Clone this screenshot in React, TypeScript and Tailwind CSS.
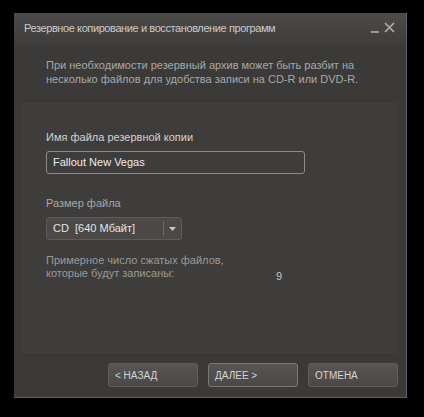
export default function App() {
  return (
    <div
      className="w-[424px] h-[417px] bg-black pt-[13px] pl-[14px]"
      style={{ fontFamily: '"Liberation Sans", Arial, sans-serif' }}
    >
      <div className="w-[393px] h-[385px] flex flex-col bg-[#3b3a38] border-r border-b border-[#56606c]">
        {/* title bar */}
        <div className="h-[32px] flex items-start justify-between pl-[10px] pr-[11px] pt-[8px] bg-gradient-to-b from-[#4d4b49] to-[#3e3d3b]">
          <span className="text-[11px] tracking-[-0.4px] text-[#cacaca] leading-[14px]">
            Резервное копирование и восстановление программ
          </span>
          <div className="flex items-center gap-[5px] mt-[1px]">
            <div className="w-[8px] h-[2px] bg-[#9a9a9a] mt-[9px]" />
            <svg width="11" height="11" viewBox="0 0 11 11">
              <path d="M1 1L10 10M10 1L1 10" stroke="#b0b0b0" strokeWidth="1.6" />
            </svg>
          </div>
        </div>

        <p className="mt-[13px] ml-[32px] text-[11px] leading-[14px] text-[#a8a8a8]">
          При необходимости резервный архив может быть разбит на
          <br />
          несколько файлов для удобства записи на CD-R или DVD-R.
        </p>

        <div className="mt-[17px] ml-[8px] w-[375px] h-[250px] bg-[#3e3d3b] border border-[#42413f] pl-[23px] pt-[26px]">
          <div className="text-[11px] leading-[14px] text-[#d2d2d2]">Имя файла резервной копии</div>
          <div className="mt-[7px] w-[259px] h-[23px] rounded-[3px] border border-[#8c8b89] flex items-center pl-[6px] text-[11px] text-[#ececec]">
            Fallout New Vegas
          </div>

          <div className="mt-[22px] text-[11px] leading-[14px] text-[#a8a8a8]">Размер файла</div>
          <div className="mt-[7px] w-[136px] h-[23px] rounded-[3px] border border-[#5c5b59] bg-[#4a4947] flex items-center text-[11px] text-[#e4e4e4]">
            <span className="flex-1 pl-[6px] whitespace-pre">CD  [640 Мбайт]</span>
            <div className="w-px h-[15px] bg-[#6a6967]" />
            <div className="w-[17px] flex justify-center">
              <svg width="7" height="4" viewBox="0 0 7 4">
                <path d="M0 0H7L3.5 4Z" fill="#c8c8c8" />
              </svg>
            </div>
          </div>

          <div className="mt-[14px] flex items-end text-[11px] leading-[13px] text-[#9a9a9a]">
            <div className="w-[230px]">
              Примерное число сжатых файлов,
              <br />
              которые будут записаны:
            </div>
            <div className="text-[#c4c4c4] mb-[-3px]">9</div>
          </div>
        </div>

        <div className="mt-[10px] ml-[94px] flex gap-[10px]">
          {["< НАЗАД", "ДАЛЕЕ >", "ОТМЕНА"].map((t, i) => (
            <div
              key={t}
              className={`w-[90px] h-[24px] rounded-[3px] border flex items-center pl-[6px] text-[10px] text-[#d4d4d4] bg-gradient-to-b from-[#585654] to-[#4a4846] ${
                i === 1 ? "border-[#7a7876]" : "border-[#605e5c]"
              }`}
            >
              {t}
            </div>
          ))}
        </div>
      </div>
    </div>
  );
}
